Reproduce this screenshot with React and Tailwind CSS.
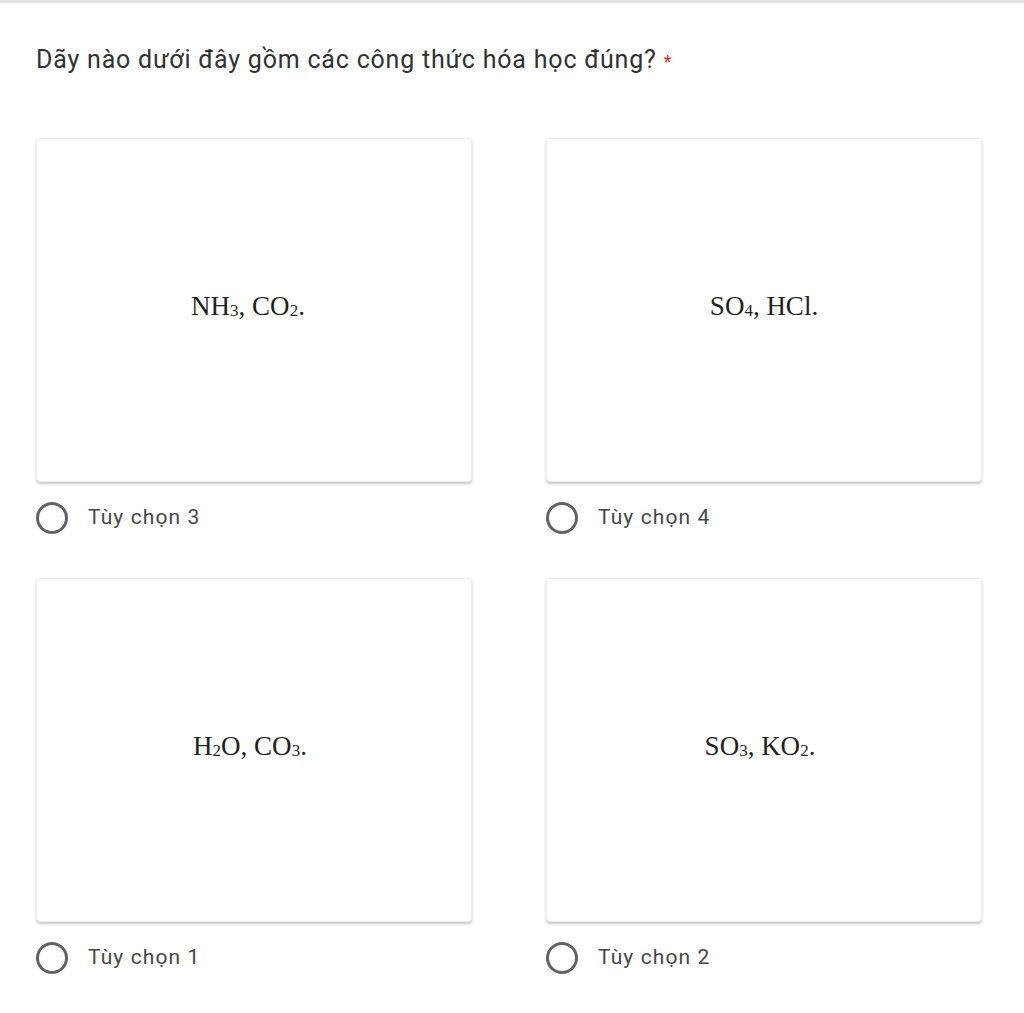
import React from 'react';

const options = [
  { label: 'Tùy chọn 3', formula: [['NH', '3'], [', CO', '2'], ['.', null]], shift: '-translate-x-[6px]' },
  { label: 'Tùy chọn 4', formula: [['SO', '4'], [', HCl.', null]], shift: '' },
  { label: 'Tùy chọn 1', formula: [['H', '2'], ['O, CO', '3'], ['.', null]], shift: '-translate-x-[4px]' },
  { label: 'Tùy chọn 2', formula: [['SO', '3'], [', KO', '2'], ['.', null]], shift: '-translate-x-[4px]' },
];

function Formula({ parts, shift }) {
  return (
    <span className={`font-['Liberation_Serif',serif] text-[27px] text-[#1f1f1f] leading-none -translate-y-[4px] ${shift}`}>
      {parts.map(([text, sub], i) => (
        <React.Fragment key={i}>
          {text}
          {sub && <span className="text-[17px] relative top-[1px]">{sub}</span>}
        </React.Fragment>
      ))}
    </span>
  );
}

function Option({ label, formula, shift }) {
  return (
    <div className="flex flex-col">
      <div className="h-[344px] bg-white rounded-[4px] border border-[#ececec] shadow-[0_2px_3px_rgba(0,0,0,0.22)] flex items-center justify-center">
        <Formula parts={formula} shift={shift} />
      </div>
      <div className="flex items-center mt-[20px] h-[32px]">
        <div className="w-[32px] h-[32px] rounded-full border-[3px] border-[#5f6368] shrink-0" />
        <span className="ml-[20px] text-[21px] text-[#444746] font-['Roboto',sans-serif] tracking-[1.1px]">{label}</span>
      </div>
    </div>
  );
}

export default function App() {
  return (
    <div className="min-h-screen bg-white border-t-[3px] border-[#e4e4e4] font-['Roboto',sans-serif]">
      <div className="pl-[36px] pt-[41px]">
        <h1 className="text-[25px] leading-[32px] text-[#303134] font-normal tracking-[0.8px]">
          Dãy nào dưới đây gồm các công thức hóa học đúng? <span className="text-[#d93025] text-[18px]">*</span>
        </h1>
      </div>
      <div className="grid grid-cols-[436px_436px] gap-x-[74px] gap-y-[44px] pl-[36px] mt-[60px]">
        {options.map((o) => (
          <Option key={o.label} {...o} />
        ))}
      </div>
    </div>
  );
}
